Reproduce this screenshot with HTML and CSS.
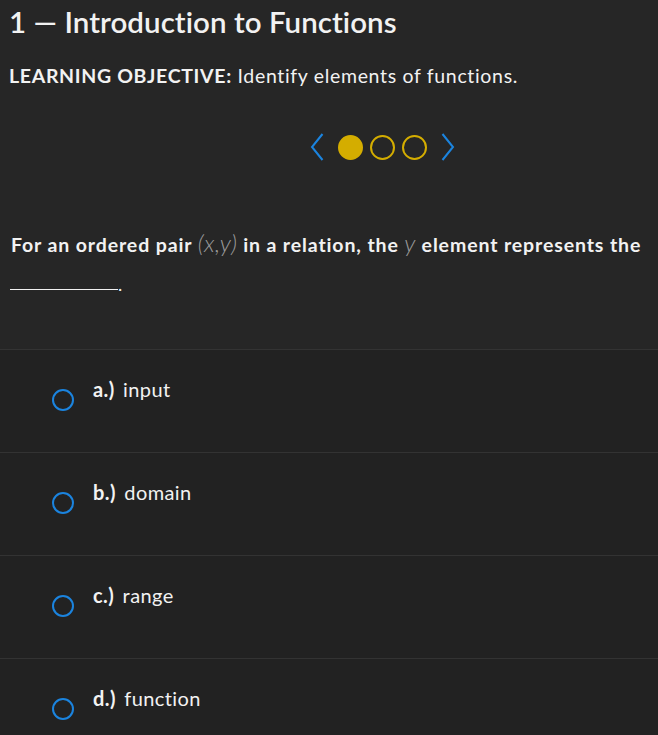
FILE: index.html
```html
<!DOCTYPE html>
<html>
<head>
<meta charset="utf-8">
<link rel="stylesheet" href="styles.css">
</head>
<body>
<div class="page">
  <header class="intro">
    <h1 class="title">1 — Introduction to Functions</h1>
    <p class="objective"><span class="obj-label">LEARNING OBJECTIVE:</span> Identify elements of functions.</p>
    <nav class="pager">
      <svg class="chev" width="14" height="28" viewBox="0 0 14 28"><path d="M12.5 1 L2 14 L12.5 27" fill="none" stroke="#1b84df" stroke-width="2"/></svg>
      <span class="dot dot-active"></span>
      <span class="dot"></span>
      <span class="dot"></span>
      <svg class="chev" width="14" height="28" viewBox="0 0 14 28"><path d="M1.5 1 L12 14 L1.5 27" fill="none" stroke="#1b84df" stroke-width="2"/></svg>
    </nav>
    <p class="question">For an ordered pair <span class="math">(x,y)</span> in a relation, the <span class="math">y</span> element represents the</p>
    <p class="blank-line"><span class="blank"></span>.</p>
  </header>
  <ul class="options">
    <li class="option"><span class="radio"></span><span class="opt-text"><b>a.)</b> input</span></li>
    <li class="option"><span class="radio"></span><span class="opt-text"><b>b.)</b> domain</span></li>
    <li class="option"><span class="radio"></span><span class="opt-text"><b>c.)</b> range</span></li>
    <li class="option"><span class="radio"></span><span class="opt-text"><b>d.)</b> function</span></li>
  </ul>
</div>
</body>
</html>
```
FILE: styles.css
```css
* { box-sizing: border-box; }
html, body { margin: 0; padding: 0; background: #222222; }
body { font-family: Lato, "Open Sans", sans-serif; color: #f2f2f2; }
.page { width: 658px; }
.intro { background: #262626; padding: 5px 9px 53px 9px; border-bottom: 1px solid #333333; }
.title { margin: 0; font-size: 29.5px; font-weight: 600; line-height: 34px; letter-spacing: 0.05px; }
.objective { margin: 25px 0 0 0; font-size: 19.5px; line-height: 24px; letter-spacing: 0.67px; }
.obj-label { font-weight: 700; }
.pager { display: flex; justify-content: center; align-items: center; gap: 7px; margin: 45px 0 0 0; padding-left: 106px; height: 28px; }
.chev { display: block; }
.pager .chev:first-child { margin-right: 7px; }
.pager .chev:last-child { margin-left: 7px; }
.dot { width: 25px; height: 25px; border-radius: 50%; border: 2px solid #d4ad00; display: block; }
.dot-active { background: #d4ad00; }
.question { margin: 70px 0 0 2px; font-weight: 700; font-size: 19.5px; line-height: 24px; letter-spacing: 0.88px; white-space: nowrap; }
.math { font-weight: 300; font-style: italic; color: #9a9a9a; font-size: 24px; letter-spacing: 0.5px; }
.blank-line { margin: 15px 0 0 1px; font-size: 18px; line-height: 24px; height: 24px; display: flex; align-items: flex-end; }
.blank { display: inline-block; width: 108px; border-bottom: 1px solid #f2f2f2; margin-bottom: 6px; }
.options { list-style: none; margin: 0; padding: 0; }
.option { height: 103px; border-bottom: 1px solid #333333; display: flex; align-items: flex-start; padding: 27px 0 0 52px; }
.option:last-child { border-bottom: none; }
.radio { width: 22px; height: 22px; border: 2.5px solid #1b84df; border-radius: 50%; margin-top: 12px; flex: none; }
.opt-text { margin-left: 19px; font-size: 20px; line-height: 24px; letter-spacing: 0.4px; }
.opt-text b { font-weight: 700; margin-right: 3px; }
```
